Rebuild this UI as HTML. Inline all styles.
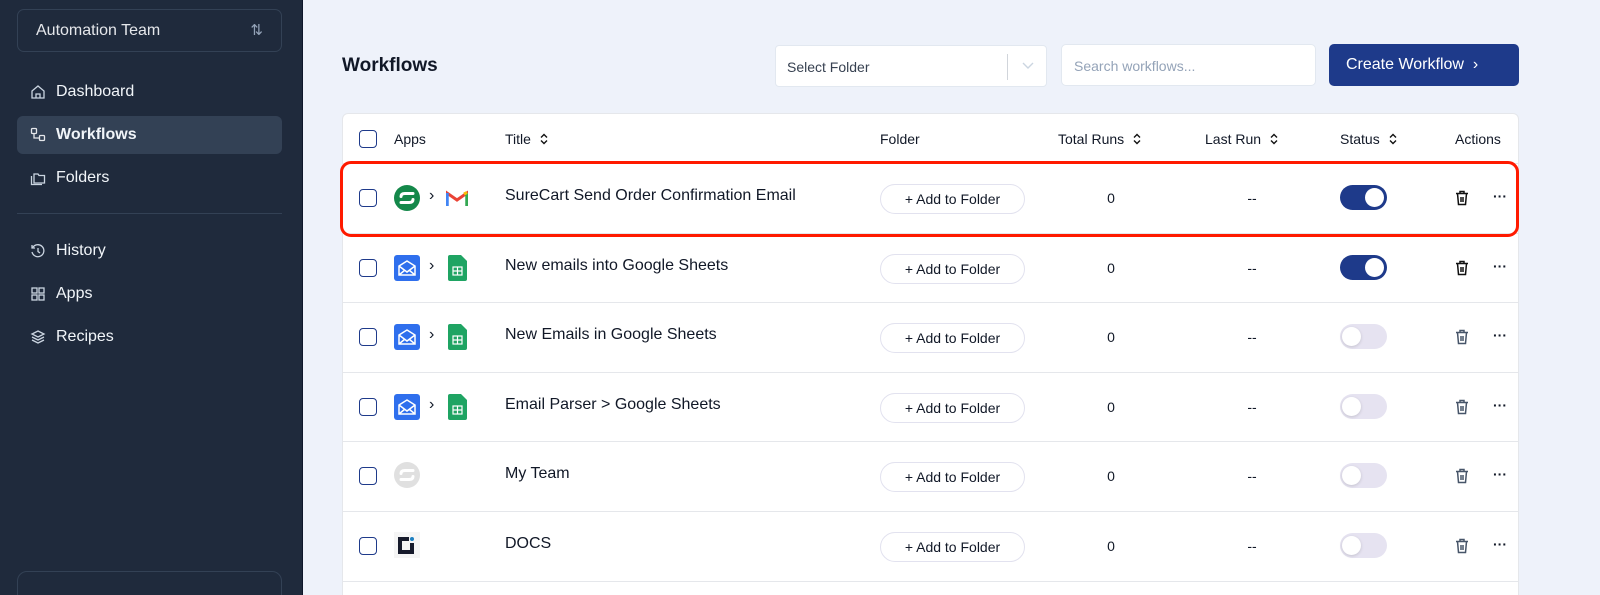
<!DOCTYPE html>
<html><head><style>
*{box-sizing:border-box;margin:0;padding:0}
html,body{width:1600px;height:595px;overflow:hidden}
body{background:#eef2fa;font-family:"Liberation Sans",sans-serif;position:relative;color:#111827}
.sb{position:absolute;left:0;top:0;width:303px;height:595px;background:#1f2a3c;border-right:1px solid #0f172a}
.team{position:absolute;left:17px;top:9px;width:265px;height:43px;border:1px solid #334155;border-radius:7px;color:#e5e7eb;font-size:16px;padding:12px 0 0 18px}
.team span{position:absolute;right:18px;top:11px;font-size:15px;color:#94a3b8}
.nav{position:absolute;left:17px;width:265px;height:38px;border-radius:6px;color:#f1f5f9;font-size:16px;padding:10px 0 0 39px}
.nav svg{position:absolute;left:13px;top:11px}
.nav.act{background:#334155;font-weight:bold}
.sep{position:absolute;left:17px;top:213px;width:265px;height:1px;background:#334155}
.bot{position:absolute;left:17px;top:571px;width:265px;height:40px;border:1px solid #334155;border-radius:10px}
h1{position:absolute;left:342px;top:55px;font-size:19px;font-weight:bold}
.sel{position:absolute;left:775px;top:45px;width:272px;height:42px;background:#fff;border:1px solid #e2e8f0;border-radius:4px;font-size:14px;color:#374151;padding:13px 0 0 11px}
.sel i{position:absolute;left:231px;top:8px;width:1px;height:26px;background:#d1d5db}
.sel svg{position:absolute;right:12px;top:16px}
.srch{position:absolute;left:1061px;top:44px;width:255px;height:42px;background:#fff;border:1px solid #e2e8f0;border-radius:5px;font-size:14px;color:#94a3b8;padding:13px 0 0 12px}
.btn{position:absolute;left:1329px;top:44px;width:190px;height:42px;background:#1e3a8a;border-radius:5px;color:#fff;font-size:16px;padding:12px 0 0 17px}
.card{position:absolute;left:342px;top:113px;width:1177px;height:500px;background:#fff;border:1px solid #e5e7eb;border-radius:6px}
.hd{position:absolute;top:131px;font-size:14px;color:#111827}
.hd svg{margin-left:8px;vertical-align:-1px}
.cb{position:absolute;left:359px;width:18px;height:18px;border:1.5px solid #1e3a8a;border-radius:4px}
.row{position:absolute;left:343px;width:1175px;height:1px;background:#e5e7eb}
.t{position:absolute;left:505px;font-size:16px;color:#111827}
.af{position:absolute;left:880px;width:145px;height:30px;border:1px solid #e2e2ef;border-radius:15px;font-size:14px;color:#111827;text-align:center;line-height:28px}
.n{position:absolute;width:40px;text-align:center;font-size:14px}
.tg{position:absolute;left:1340px;width:47px;height:25px;border-radius:13px;background:#1e3a8a}
.tg::after{content:"";position:absolute;right:3px;top:3px;width:19px;height:19px;border-radius:50%;background:#fff}
.tg.off{background:#e6e3f1}
.tg.off::after{left:2px;right:auto;box-shadow:0 1px 3px rgba(0,0,0,.15)}
.gt{position:absolute;left:429px;font-size:16px}
.red{position:absolute;left:340px;top:161px;width:1179px;height:76px;border:3px solid #ff1a00;border-radius:11px}
</style></head><body>
<svg style="display:none"><symbol id="tr" viewBox="0 0 14 16"><path d="M1 3.5h12M5 3.5V1.5h4v2M2.5 3.5l1 11h7l1-11M6 7v5M8 7v5" fill="none" stroke="currentColor" stroke-width="1.5"/></symbol><symbol id="so" viewBox="0 0 10 12"><path d="M2 4.5l3-3 3 3M2 7.5l3 3 3-3" fill="none" stroke="#111" stroke-width="1.4"/></symbol><symbol id="ml" viewBox="0 0 26 26"><path d="M5 11l8-5 8 5v9H5z M5 11l8 6 8-6M5 20l6-5M21 20l-6-5" fill="none" stroke="#fff" stroke-width="1.5"/></symbol><symbol id="gs" viewBox="0 0 19 26"><path d="M0 2q0-2 2-2h11l6 6v18q0 2-2 2H2q-2 0-2-2z" fill="#1fa463"/><rect x="5" y="12" width="9" height="8" fill="none" stroke="#fff" stroke-width="1.2"/><path d="M5 16h9M9.5 12v8" stroke="#fff" stroke-width="1.2"/></symbol></svg>
<div class="sb">
<div class="team">Automation Team<span>⇅</span></div>
<div class="nav" style="top:73px"><svg width="16" height="16" viewBox="0 0 16 16" fill="none" stroke="#cbd5e1" stroke-width="1.3"><path d="M2 7L8 2l6 5v7H2z"/><path d="M6 14v-4h4v4"/></svg>Dashboard</div>
<div class="nav act" style="top:116px"><svg width="16" height="16" viewBox="0 0 16 16" fill="none" stroke="#e5e7eb" stroke-width="1.3"><rect x="1.5" y="1.5" width="5" height="5" rx="1"/><rect x="9.5" y="8.5" width="5" height="5" rx="1"/><path d="M4 6.5v4.5h5.5"/></svg>Workflows</div>
<div class="nav" style="top:159px"><svg width="16" height="16" viewBox="0 0 16 16" fill="none" stroke="#cbd5e1" stroke-width="1.3"><path d="M4 4h4l1 1.5h5.5V13H4z"/><path d="M1.5 6v8.5H12"/></svg>Folders</div>
<div class="sep"></div>
<div class="nav" style="top:232px"><svg width="16" height="16" viewBox="0 0 16 16" fill="none" stroke="#cbd5e1" stroke-width="1.3"><path d="M2.5 5A6 6 0 1 1 2 9"/><path d="M2 2v3h3M8 5v3.5l2 1.5"/></svg>History</div>
<div class="nav" style="top:275px"><svg width="16" height="16" viewBox="0 0 16 16" fill="none" stroke="#cbd5e1" stroke-width="1.3"><rect x="2" y="2" width="5" height="5"/><rect x="9" y="2" width="5" height="5"/><rect x="2" y="9" width="5" height="5"/><rect x="9" y="9" width="5" height="5"/></svg>Apps</div>
<div class="nav" style="top:318px"><svg width="16" height="16" viewBox="0 0 16 16" fill="none" stroke="#cbd5e1" stroke-width="1.3"><path d="M8 2l6 3-6 3-6-3z"/><path d="M2 8l6 3 6-3M2 11l6 3 6-3"/></svg>Recipes</div>
<div class="bot"></div>
</div>
<h1>Workflows</h1>
<div class="sel">Select Folder<i></i><svg width="12" height="8"><path d="M1 1l5 5 5-5" fill="none" stroke="#cbd5e1" stroke-width="1.4"/></svg></div>
<div class="srch">Search workflows...</div>
<div class="btn">Create Workflow &nbsp;›</div>
<div class="card"></div>
<div class="cb" style="top:130px"></div>
<div class="hd" style="left:394px">Apps</div>
<div class="hd" style="left:505px">Title<svg width="10" height="12"><use href="#so"/></svg></div>
<div class="hd" style="left:880px">Folder</div>
<div class="hd" style="left:1058px">Total Runs<svg width="10" height="12"><use href="#so"/></svg></div>
<div class="hd" style="left:1205px">Last Run<svg width="10" height="12"><use href="#so"/></svg></div>
<div class="hd" style="left:1340px">Status<svg width="10" height="12"><use href="#so"/></svg></div>
<div class="hd" style="left:1455px">Actions</div>

<div class="row" style="top:163px"></div>
<div class="row" style="top:233px"></div>
<div class="row" style="top:302px"></div>
<div class="row" style="top:372px"></div>
<div class="row" style="top:441px"></div>
<div class="row" style="top:511px"></div>
<div class="row" style="top:581px"></div>

<div class="cb" style="top:189px"></div>
<svg style="position:absolute;left:394px;top:185px" width="26" height="26" viewBox="0 0 26 26"><circle cx="13" cy="13" r="13" fill="#14884a"/><path d="M7 11.5q0-3 4-3h8M19 14.5q0 3-4 3H7" stroke="#fff" stroke-width="3" fill="none" stroke-linecap="round"/></svg>
<div class="gt" style="top:187px">›</div>
<svg style="position:absolute;left:446px;top:190px" width="22" height="17" viewBox="0 0 22 17"><path d="M1 16V3l10 7 10-7v13" fill="none" stroke="#ea4335" stroke-width="3"/><path d="M1 16V3" stroke="#4285f4" stroke-width="3.5"/><path d="M21 16V3" stroke="#34a853" stroke-width="3.5"/><path d="M18 4l3-1.5" stroke="#fbbc04" stroke-width="3"/></svg>
<div class="t" style="top:187px">SureCart Send Order Confirmation Email</div>
<div class="af" style="top:184px">+ Add to Folder</div>
<div class="n" style="left:1091px;top:190px">0</div>
<div class="n" style="left:1232px;top:190px">--</div>
<div class="tg" style="top:185px"></div>

<div class="cb" style="top:259px"></div>
<div class="cb" style="top:328px"></div>
<div class="cb" style="top:398px"></div>
<div class="cb" style="top:467px"></div>
<div class="cb" style="top:537px"></div>
<div class="t" style="top:257px">New emails into Google Sheets</div>
<div class="t" style="top:326px">New Emails in Google Sheets</div>
<div class="t" style="top:396px">Email Parser &gt; Google Sheets</div>
<div class="t" style="top:465px">My Team</div>
<div class="t" style="top:535px">DOCS</div>

<div style="position:absolute;left:394px;top:255px;width:26px;height:26px;background:#2f6fed;border-radius:3px"><svg width="26" height="26"><use href="#ml"/></svg></div>
<div style="position:absolute;left:394px;top:324px;width:26px;height:26px;background:#2f6fed;border-radius:3px"><svg width="26" height="26"><use href="#ml"/></svg></div>
<div style="position:absolute;left:394px;top:394px;width:26px;height:26px;background:#2f6fed;border-radius:3px"><svg width="26" height="26"><use href="#ml"/></svg></div>
<div class="gt" style="top:257px">›</div>
<div class="gt" style="top:326px">›</div>
<div class="gt" style="top:396px">›</div>
<svg style="position:absolute;left:448px;top:255px" width="19" height="26"><use href="#gs"/></svg>
<svg style="position:absolute;left:448px;top:324px" width="19" height="26"><use href="#gs"/></svg>
<svg style="position:absolute;left:448px;top:394px" width="19" height="26"><use href="#gs"/></svg>
<svg style="position:absolute;left:394px;top:462px" width="26" height="26" viewBox="0 0 26 26"><circle cx="13" cy="13" r="13" fill="#e0e0e0"/><path d="M7 11.5q0-3 4-3h8M19 14.5q0 3-4 3H7" stroke="#fff" stroke-width="3" fill="none" stroke-linecap="round"/></svg>
<svg style="position:absolute;left:394px;top:532px" width="26" height="26"><rect width="26" height="26" fill="#f5f5f5"/><path d="M4 5h11v4H8v9h11v4H4z" fill="#161a2b"/><rect x="16" y="11" width="4" height="11" fill="#161a2b"/><circle cx="18" cy="7" r="2" fill="#1d7fc0"/></svg>

<div class="af" style="top:254px">+ Add to Folder</div>
<div class="af" style="top:323px">+ Add to Folder</div>
<div class="af" style="top:393px">+ Add to Folder</div>
<div class="af" style="top:462px">+ Add to Folder</div>
<div class="af" style="top:532px">+ Add to Folder</div>
<div class="n" style="left:1091px;top:260px">0</div>
<div class="n" style="left:1091px;top:329px">0</div>
<div class="n" style="left:1091px;top:399px">0</div>
<div class="n" style="left:1091px;top:468px">0</div>
<div class="n" style="left:1091px;top:538px">0</div>
<div class="n" style="left:1232px;top:260px">--</div>
<div class="n" style="left:1232px;top:329px">--</div>
<div class="n" style="left:1232px;top:399px">--</div>
<div class="n" style="left:1232px;top:468px">--</div>
<div class="n" style="left:1232px;top:538px">--</div>
<div class="tg" style="top:255px"></div>
<div class="tg off" style="top:324px"></div>
<div class="tg off" style="top:394px"></div>
<div class="tg off" style="top:463px"></div>
<div class="tg off" style="top:533px"></div>

<svg style="position:absolute;left:1455px;top:190px;color:#111" width="14" height="16"><use href="#tr"/></svg>
<svg style="position:absolute;left:1455px;top:260px;color:#111" width="14" height="16"><use href="#tr"/></svg>
<svg style="position:absolute;left:1455px;top:329px;color:#475569" width="14" height="16"><use href="#tr"/></svg>
<svg style="position:absolute;left:1455px;top:399px;color:#475569" width="14" height="16"><use href="#tr"/></svg>
<svg style="position:absolute;left:1455px;top:468px;color:#475569" width="14" height="16"><use href="#tr"/></svg>
<svg style="position:absolute;left:1455px;top:538px;color:#475569" width="14" height="16"><use href="#tr"/></svg>
<div class="n" style="left:1480px;top:188px;font-weight:bold">···</div>
<div class="n" style="left:1480px;top:258px;font-weight:bold">···</div>
<div class="n" style="left:1480px;top:327px;font-weight:bold">···</div>
<div class="n" style="left:1480px;top:397px;font-weight:bold">···</div>
<div class="n" style="left:1480px;top:466px;font-weight:bold">···</div>
<div class="n" style="left:1480px;top:536px;font-weight:bold">···</div>

<div class="red"></div>
</body></html>
